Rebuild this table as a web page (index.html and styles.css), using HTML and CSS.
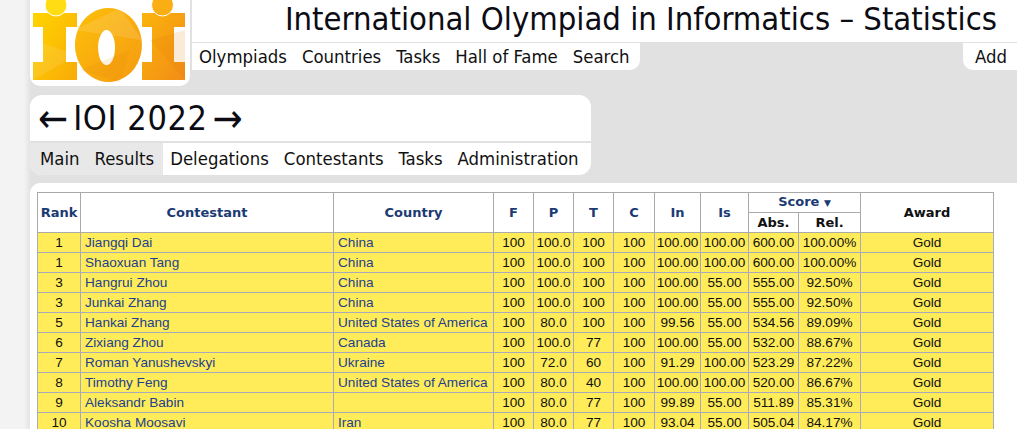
FILE: index.html
```html
<!DOCTYPE html>
<html lang="en">
<head>
<meta charset="utf-8">
<title>IOI 2022 Results</title>
<link rel="stylesheet" href="styles.css">
</head>
<body>
<div class="page">
  <header class="top">
    <a class="logo" href="#">
      <svg width="160" height="86" viewBox="0 0 160 86" xmlns="http://www.w3.org/2000/svg">
        <defs>
          <linearGradient id="g1" x1="0" y1="0" x2="1" y2="1">
            <stop offset="0" stop-color="#ffd400"/>
            <stop offset="1" stop-color="#f9ab08"/>
          </linearGradient>
          <linearGradient id="g2" x1="0" y1="0" x2="1" y2="1">
            <stop offset="0" stop-color="#fdc00a"/>
            <stop offset="1" stop-color="#f59a12"/>
          </linearGradient>
          <linearGradient id="g3" x1="0" y1="0" x2="1" y2="1">
            <stop offset="0" stop-color="#fbb40c"/>
            <stop offset="1" stop-color="#f28c17"/>
          </linearGradient>
        </defs>
        <path d="M3 13H47V27H36V62H47V80H3V62H13V27H3Z" fill="url(#g1)"/>
        <circle cx="26" cy="5" r="11" fill="#ffdc14" stroke="#fff" stroke-width="1"/>
        <path fill-rule="evenodd" d="M78.5 8A33.5 37 0 1 1 78.4 8ZM76.5 30A8.5 17.5 0 1 0 76.6 30Z" fill="url(#g2)"/>
        <path d="M112 13H155V27H144V62H155V80H112V62H122V27H112Z" fill="url(#g3)"/>
        <circle cx="132.5" cy="5" r="11" fill="#fbae14" stroke="#fff" stroke-width="1"/>
        <path d="M45 30L90 8L112 40Z" fill="#fff" opacity="0.12"/>
        <path d="M50 70L100 50L90 82Z" fill="#e07a00" opacity="0.12"/>
        <path d="M3 40L47 55L3 80Z" fill="#fff" opacity="0.1"/>
        <path d="M120 40L155 30L155 80Z" fill="#e07a00" opacity="0.15"/>
      </svg>
    </a>
    <div class="topright">
      <div class="sitetitle">International Olympiad in Informatics – Statistics</div>
      <div class="navrow">
        <nav class="mainnav">
          <a href="#">Olympiads</a>
          <a href="#">Countries</a>
          <a href="#">Tasks</a>
          <a href="#">Hall of Fame</a>
          <a href="#">Search</a>
        </nav>
        <div class="addbox"><a href="#">Add</a></div>
      </div>
    </div>
  </header>

  <section class="event">
    <h1 class="event-title"><a class="arrow" href="#">←</a><span class="event-name">IOI 2022</span><a class="arrow" href="#">→</a></h1>
    <div class="tabs">
      <div class="tabs-current">
        <a href="#">Main</a>
        <a href="#">Results</a>
      </div>
      <a href="#">Delegations</a>
      <a href="#">Contestants</a>
      <a href="#">Tasks</a>
      <a href="#">Administration</a>
    </div>
  </section>

  <main class="content">
    <table class="results">
      <colgroup>
        <col class="c-rank"><col class="c-name"><col class="c-country">
        <col class="c-t"><col class="c-t"><col class="c-t"><col class="c-t4">
        <col class="c-in"><col class="c-is"><col class="c-abs"><col class="c-rel"><col class="c-award">
      </colgroup>
      <thead>
        <tr>
          <th rowspan="2"><a href="#">Rank</a></th>
          <th rowspan="2"><a href="#">Contestant</a></th>
          <th rowspan="2"><a href="#">Country</a></th>
          <th rowspan="2"><a href="#">F</a></th>
          <th rowspan="2"><a href="#">P</a></th>
          <th rowspan="2"><a href="#">T</a></th>
          <th rowspan="2"><a href="#">C</a></th>
          <th rowspan="2"><a href="#">In</a></th>
          <th rowspan="2"><a href="#">Is</a></th>
          <th colspan="2"><a href="#">Score <span class="sort">▼</span></a></th>
          <th rowspan="2">Award</th>
        </tr>
        <tr>
          <th>Abs.</th>
          <th>Rel.</th>
        </tr>
      </thead>
      <tbody>
        <tr><td class="num">1</td><td><a href="#">Jiangqi Dai</a></td><td><a href="#">China</a></td><td class="num">100</td><td class="num">100.0</td><td class="num">100</td><td class="num">100</td><td class="num">100.00</td><td class="num">100.00</td><td class="num">600.00</td><td class="num">100.00%</td><td class="num">Gold</td></tr>
        <tr><td class="num">1</td><td><a href="#">Shaoxuan Tang</a></td><td><a href="#">China</a></td><td class="num">100</td><td class="num">100.0</td><td class="num">100</td><td class="num">100</td><td class="num">100.00</td><td class="num">100.00</td><td class="num">600.00</td><td class="num">100.00%</td><td class="num">Gold</td></tr>
        <tr><td class="num">3</td><td><a href="#">Hangrui Zhou</a></td><td><a href="#">China</a></td><td class="num">100</td><td class="num">100.0</td><td class="num">100</td><td class="num">100</td><td class="num">100.00</td><td class="num">55.00</td><td class="num">555.00</td><td class="num">92.50%</td><td class="num">Gold</td></tr>
        <tr><td class="num">3</td><td><a href="#">Junkai Zhang</a></td><td><a href="#">China</a></td><td class="num">100</td><td class="num">100.0</td><td class="num">100</td><td class="num">100</td><td class="num">100.00</td><td class="num">55.00</td><td class="num">555.00</td><td class="num">92.50%</td><td class="num">Gold</td></tr>
        <tr><td class="num">5</td><td><a href="#">Hankai Zhang</a></td><td><a href="#">United States of America</a></td><td class="num">100</td><td class="num">80.0</td><td class="num">100</td><td class="num">100</td><td class="num">99.56</td><td class="num">55.00</td><td class="num">534.56</td><td class="num">89.09%</td><td class="num">Gold</td></tr>
        <tr><td class="num">6</td><td><a href="#">Zixiang Zhou</a></td><td><a href="#">Canada</a></td><td class="num">100</td><td class="num">100.0</td><td class="num">77</td><td class="num">100</td><td class="num">100.00</td><td class="num">55.00</td><td class="num">532.00</td><td class="num">88.67%</td><td class="num">Gold</td></tr>
        <tr><td class="num">7</td><td><a href="#">Roman Yanushevskyi</a></td><td><a href="#">Ukraine</a></td><td class="num">100</td><td class="num">72.0</td><td class="num">60</td><td class="num">100</td><td class="num">91.29</td><td class="num">100.00</td><td class="num">523.29</td><td class="num">87.22%</td><td class="num">Gold</td></tr>
        <tr><td class="num">8</td><td><a href="#">Timothy Feng</a></td><td><a href="#">United States of America</a></td><td class="num">100</td><td class="num">80.0</td><td class="num">40</td><td class="num">100</td><td class="num">100.00</td><td class="num">100.00</td><td class="num">520.00</td><td class="num">86.67%</td><td class="num">Gold</td></tr>
        <tr><td class="num">9</td><td><a href="#">Aleksandr Babin</a></td><td></td><td class="num">100</td><td class="num">80.0</td><td class="num">77</td><td class="num">100</td><td class="num">99.89</td><td class="num">55.00</td><td class="num">511.89</td><td class="num">85.31%</td><td class="num">Gold</td></tr>
        <tr><td class="num">10</td><td><a href="#">Koosha Moosavi</a></td><td><a href="#">Iran</a></td><td class="num">100</td><td class="num">80.0</td><td class="num">77</td><td class="num">100</td><td class="num">93.04</td><td class="num">55.00</td><td class="num">505.04</td><td class="num">84.17%</td><td class="num">Gold</td></tr>
      </tbody>
    </table>
  </main>
</div>
</body>
</html>
```

FILE: styles.css
```css
html, body {
  margin: 0;
  padding: 0;
}
body {
  background: linear-gradient(to right, #f3f3f3 0, #f3f3f3 24px, #e1e1e1 31px);
  font-family: "Liberation Sans", Arial, sans-serif;
  color: #111;
  overflow: hidden;
}
a {
  color: inherit;
  text-decoration: none;
}
.page {
  padding-left: 30px;
}

/* header */
.top {
  display: flex;
  height: 86px;
}
.logo {
  display: block;
  width: 160px;
  height: 86px;
  background: #fff;
  border-radius: 0 0 10px 10px;
  flex: none;
}
.logo svg {
  display: block;
}
.topright {
  flex: 1;
  margin-left: 2px;
  display: flex;
  flex-direction: column;
}
.sitetitle {
  background: #fff;
  height: 42px;
  line-height: 38px;
  text-align: right;
  padding-right: 20px;
  font-family: "DejaVu Sans Condensed", "DejaVu Sans", sans-serif;
  font-size: 32.5px;
  color: #0c0c14;
  white-space: nowrap;
}
.navrow {
  display: flex;
  justify-content: space-between;
  margin-top: 1px;
  height: 27px;
}
.mainnav {
  background: #fff;
  border-bottom-right-radius: 10px;
  padding: 0 10px 0 7px;
  display: flex;
  gap: 15px;
  align-items: center;
  font-family: "DejaVu Sans Condensed", "DejaVu Sans", sans-serif;
  font-size: 18.4px;
}
.addbox {
  background: #fff;
  border-bottom-left-radius: 10px;
  padding: 0 10px 0 12px;
  display: flex;
  align-items: center;
  font-family: "DejaVu Sans Condensed", "DejaVu Sans", sans-serif;
  font-size: 18.4px;
}

/* event card */
.event {
  width: 561px;
  margin-top: 9px;
  background: #fff;
  border-radius: 12px;
  overflow: hidden;
  font-family: "DejaVu Sans Condensed", "DejaVu Sans", sans-serif;
}
.event-title {
  margin: 0;
  height: 46px;
  line-height: 46px;
  font-size: 34px;
  font-weight: normal;
  padding-left: 8px;
  color: #0c0c14;
  display: flex;
  align-items: center;
}
.event-title .arrow {
  font-size: 40px;
}
.event-name {
  letter-spacing: 0.6px;
  margin: 0 5px 0 5px;
}
.tabs {
  border-top: 2px solid #e1e1e1;
  display: flex;
  height: 32px;
  align-items: center;
  font-size: 18.4px;
  line-height: 28px;
}
.tabs > a {
  padding: 0 7.5px;
}
.tabs > a:nth-child(5) {
  padding-right: 10px;
}
.tabs-current a {
  padding: 0 7.5px;
}
.tabs-current {
  background: #e8e8e8;
  display: flex;
  align-items: center;
  height: 100%;
  padding-left: 2.5px;
  padding-right: 1px;
}

/* content */
.content {
  margin-top: 8px;
  background: #fff;
  border-top-left-radius: 10px;
  padding: 9px 0 0 7px;
  height: 300px;
}
.results {
  border-collapse: collapse;
  table-layout: fixed;
  width: 956px;
  font-size: 13.6px;
}
.c-rank { width: 43px; }
.c-name { width: 253px; }
.c-country { width: 160px; }
.c-t { width: 40px; }
.c-t4 { width: 41px; }
.c-in { width: 46px; }
.c-is { width: 48px; }
.c-abs { width: 50px; }
.c-rel { width: 62px; }
.c-award { width: 133px; }

.results th {
  border: 1px solid #aaa;
  background: #fff;
  font-family: "DejaVu Sans", "Liberation Sans", sans-serif;
  font-size: 13px;
  font-weight: bold;
  color: #111;
  height: 19px;
  padding: 0;
  line-height: 17px;
  text-align: center;
  white-space: nowrap;
}
.results th a {
  color: #1b3a74;
}
.results .sort {
  font-size: 9px;
}
.results td {
  border: 1px solid #a9a9bd;
  background: #ffec58;
  height: 19px;
  line-height: 17px;
  padding: 0 4px;
  white-space: nowrap;
  overflow: hidden;
}
.results td a {
  color: #233f90;
}
.results td.num {
  text-align: center;
  padding: 0;
}
```
